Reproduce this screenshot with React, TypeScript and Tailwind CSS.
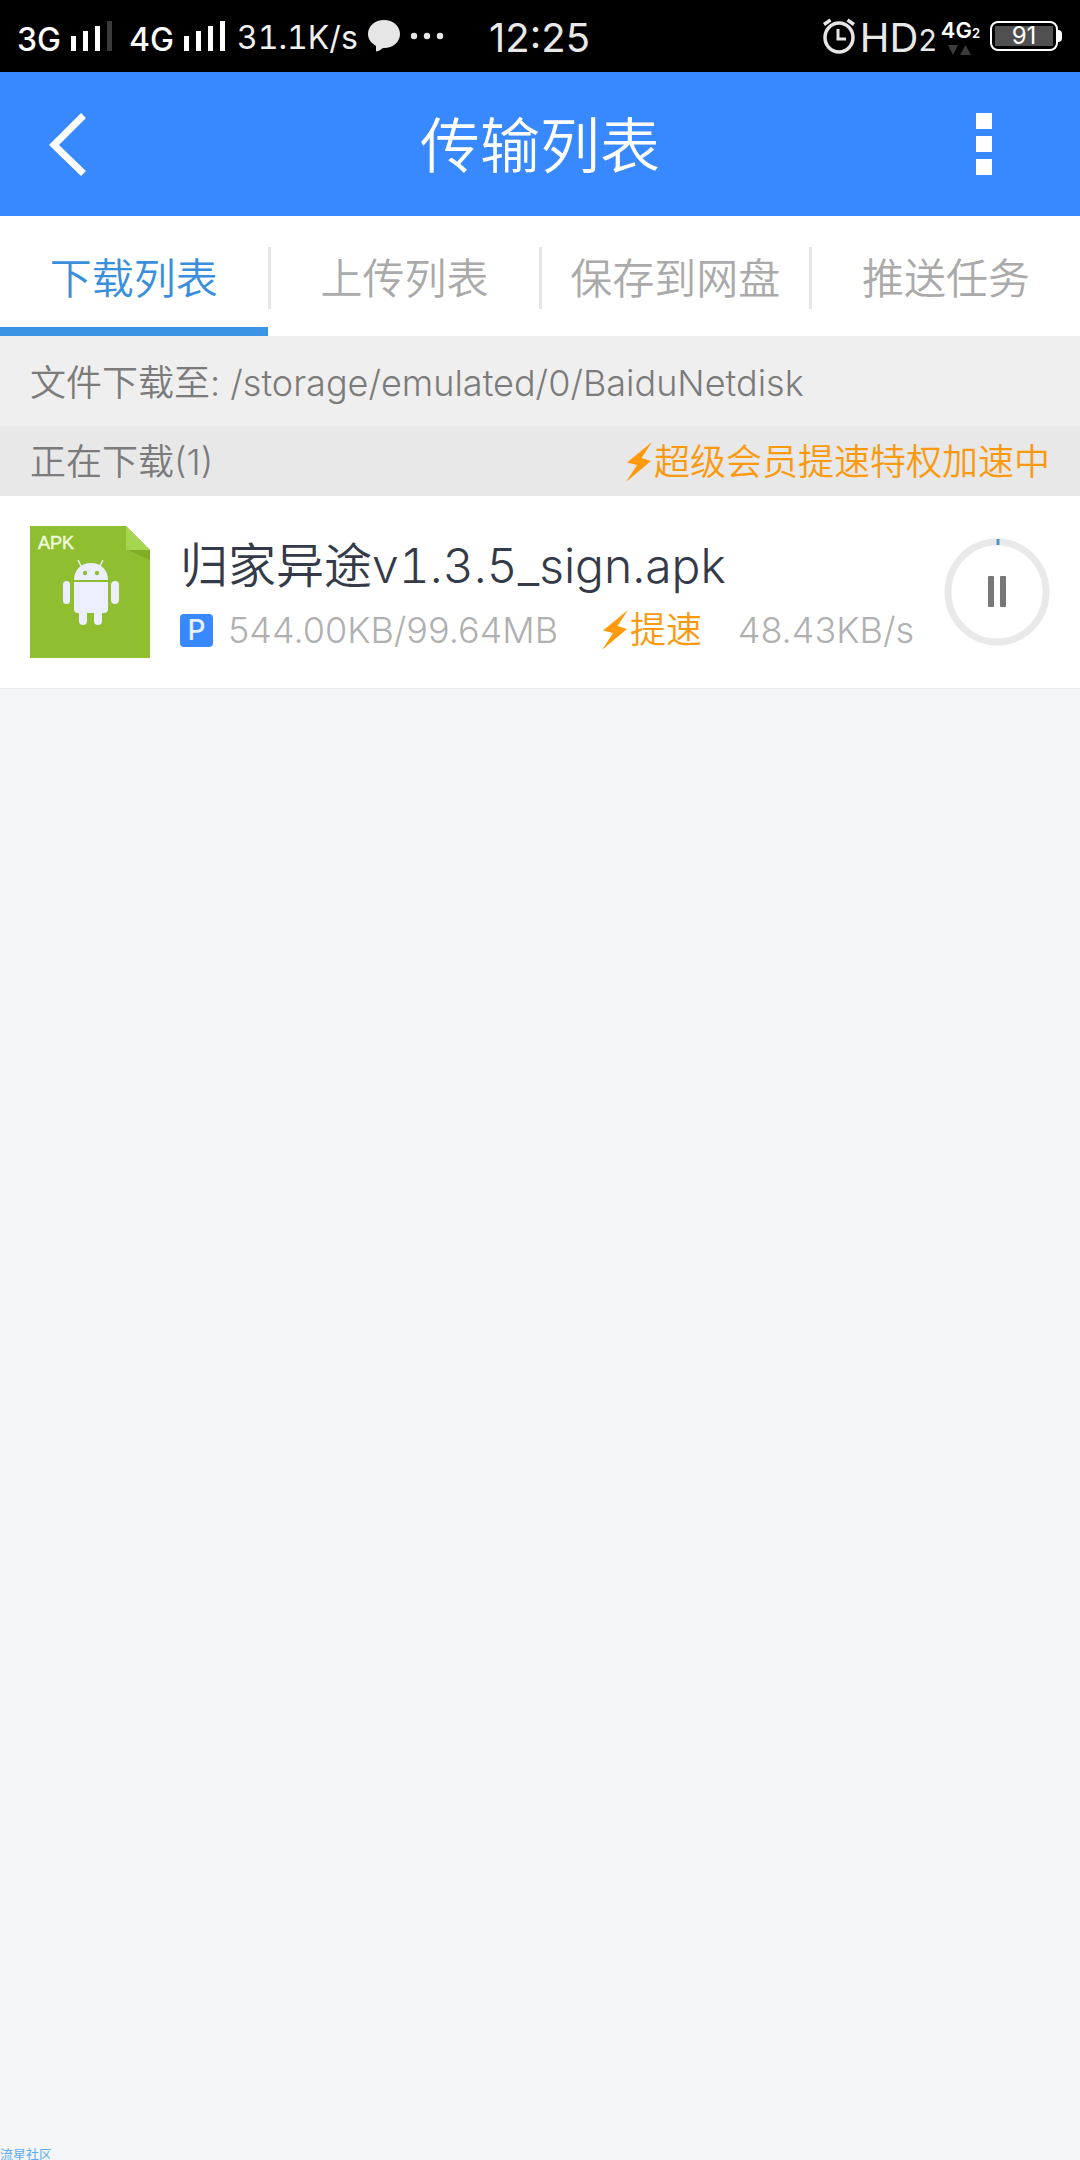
import { Fragment, useState } from "react";
import type { ReactNode } from "react";

const TABS = ["下载列表", "上传列表", "保存到网盘", "推送任务"];

function SignalBars({ weak }: { weak?: boolean }) {
    return (
        <svg width="41" height="30" viewBox="0 0 41 30" fill="#fff">
            <rect x="0" y="15" width="5" height="15" />
            <rect x="12" y="10" width="5" height="20" />
            <rect x="24" y="5" width="5" height="25" />
            <rect x="36" y="0" width="5" height="30" fill={weak ? "#3a3a3a" : "#fff"} />
        </svg>
    );
}

function Bolt() {
    return (
        <svg width="28" height="40" viewBox="0 0 28 40" fill="#ff9a0c" className="shrink-0">
            <path d="M26 0 1 20.500 11 23 0 40 25 19 15.500 16z" />
        </svg>
    );
}

function StatusBar() {
    return (
        <div className="flex h-[72px] items-center justify-between bg-black pr-[18px] pl-[17px] text-white">
            <div className="flex flex-1 items-center">
                <span className="w-[54px] pt-2 text-[32px] leading-8 font-medium">3G</span>
                <SignalBars weak />
                <span className="ml-[17px] w-[55px] pt-2 text-[32px] leading-8 font-medium">4G</span>
                <SignalBars />
                <span className="ml-3 w-[131px] pt-1 text-[32px] leading-8 text-[#f0f0f0] tabular-nums">31.1K/s</span>
                <svg width="32" height="32" viewBox="0 0 32 32" fill="#e6e6e6">
                    <path d="M16 0C7 0 0 6 0 14c0 5 3 9 8 12v5.500c3-.5 5-2 7-3.500h1c9 0 16-6 16-14S25 0 16 0z" />
                </svg>
                <svg width="34" height="8" viewBox="0 0 34 8" fill="#e6e6e6" className="ml-[10px]">
                    <circle cx="4" cy="4" r="3.200" />
                    <circle cx="17" cy="4" r="3.200" />
                    <circle cx="30" cy="4" r="3.200" />
                </svg>
            </div>
            <time className="pt-1 text-[40px] leading-10 text-[#e8e8e8]">12:25</time>
            <div className="flex flex-1 items-center justify-end">
                <svg width="34" height="36" viewBox="0 0 34 36" fill="none" stroke="#e6e6e6" strokeWidth="3.500">
                    <ellipse cx="17" cy="19.500" rx="14" ry="14.500" />
                    <path d="M16 11v10h8" strokeWidth="3" />
                    <path d="M2 6.500 8.500 2M32 6.500 25.500 2" />
                </svg>
                <span className="ml-1 pt-1 text-[40px] leading-10 text-[#e8e8e8]">HD</span>
                <span className="pt-2 text-[30px] leading-8 text-[#e8e8e8]">2</span>
                <div className="ml-1 flex flex-col items-center">
                    <span className="text-[22px] leading-6 font-semibold">
                        4G<span className="text-[13px]">2</span>
                    </span>
                    <svg width="24" height="10" viewBox="0 0 24 10" fill="#3c3c3c">
                        <path d="M0 0h10L5 10zM12 10h11L17.500 0z" />
                    </svg>
                </div>
                <div className="ml-[10px] flex items-center">
                    <div className="flex h-[30px] w-[68px] rounded-lg border-2 border-white p-[3px]">
                        <span className="flex flex-1 items-center justify-center bg-[#505050] text-[24px] leading-5">91</span>
                    </div>
                    <div className="h-3 w-1 rounded-r-sm bg-white" />
                </div>
            </div>
        </div>
    );
}

function Header() {
    return (
        <header className="flex h-36 items-center justify-between bg-[#3888ff] px-12 text-white">
            <button type="button" aria-label="返回" className="flex w-24 justify-start">
                <svg width="40" height="64" viewBox="0 0 40 64" fill="none" stroke="#fff" strokeWidth="7">
                    <path d="M35.500 3.500 6 33l29.500 28.500" />
                </svg>
            </button>
            <h1 className="pt-1 text-[60px] leading-[72px] font-[350]">传输列表</h1>
            <button type="button" aria-label="更多" className="flex w-24 flex-col items-center gap-[7px]">
                <span className="size-4 bg-white" />
                <span className="size-4 bg-white" />
                <span className="size-4 bg-white" />
            </button>
        </header>
    );
}

function Tabs() {
    const [active, setActive] = useState(0);

    return (
        <nav className="flex h-[120px] items-center bg-white">
            {TABS.map((tab, i) => (
                <Fragment key={tab}>
                    {i > 0 && <span className="mt-1 h-[62px] w-[3px] bg-[#e6e6e6]" />}
                    <button
                        type="button"
                        onClick={() => setActive(i)}
                        className={
                            active === i
                                ? "h-full flex-1 border-b-[9px] border-[#3a93e3] pt-[13px] text-[42px] font-[350] text-[#3a8fdc]"
                                : "h-full flex-1 pt-1 text-[42px] font-[350] text-[#aaaaaa]"
                        }
                    >
                        {tab}
                    </button>
                </Fragment>
            ))}
        </nav>
    );
}

function Boost({ children }: { children: ReactNode }) {
    return (
        <span className="flex items-center text-[#fa9a10]">
            <Bolt />
            {children}
        </span>
    );
}

function ApkIcon() {
    return (
        <svg width="120" height="132" viewBox="0 0 120 132" className="shrink-0">
            <path d="M0 0h96l24 24v108H0z" fill="#8fbf30" />
            <path d="M98 24h22v10z" fill="#7fad26" />
            <path d="M96 0l24 24H96z" fill="#a4d64f" />
            <text x="8" y="23" fontSize="18" fill="#eefadf" stroke="#eefadf" strokeWidth="0.500" fontFamily="Liberation Sans, sans-serif">APK</text>
            <g fill="#ecefff">
                <path d="M44 54c0-10 7-17 17-17s17 7 17 17z" />
                <path d="M44 56h34v27q0 4-4 4H48q-4 0-4-4z" />
                <rect x="33" y="55" width="7" height="23" rx="3.500" />
                <rect x="81" y="55" width="8" height="23" rx="4" />
                <rect x="49" y="80" width="8" height="19" rx="4" />
                <rect x="64" y="80" width="8" height="19" rx="4" />
            </g>
            <path d="M51 40l-3-6M70 40l3-6" stroke="#ecefff" strokeWidth="1.500" />
            <circle cx="55" cy="47" r="2.200" fill="#8fbf30" />
            <circle cx="67" cy="47" r="2.200" fill="#8fbf30" />
        </svg>
    );
}

function DownloadItem() {
    return (
        <article className="flex items-center gap-[30px] border-b border-[#e8ebee] bg-white px-[30px] py-[30px]">
            <ApkIcon />
            <div className="min-w-0 flex-1 pt-2">
                <h2 className="text-[48px] leading-[60px] font-[350] text-[#343a48] tabular-nums">归家异途v1.3.5_sign.apk</h2>
                <div className="flex items-center pt-2 text-[36px] leading-[52px] font-[350] text-[#b0b0b0]">
                    <span className="mr-[15px] flex size-[33px] items-center justify-center rounded bg-[#3888ff] text-[28px] font-medium text-[#e6f0ff]">P</span>
                    <span className="mr-11">544.00KB/99.64MB</span>
                    <Boost>提速</Boost>
                    <span className="ml-auto">48.43KB/s</span>
                </div>
            </div>
            <button type="button" aria-label="暂停" className="shrink-0">
                <svg width="106" height="108" viewBox="0 0 106 108" fill="none">
                    <ellipse cx="53" cy="54" rx="49" ry="50" stroke="#e9e9e9" strokeWidth="7" />
                    <path d="M54 1v6" stroke="#4e93cc" strokeWidth="3" />
                    <rect x="44" y="38" width="6" height="31" rx="1" fill="#777" />
                    <rect x="56" y="38" width="6" height="31" rx="1" fill="#777" />
                </svg>
            </button>
        </article>
    );
}

export default function App() {
    return (
        <div className="flex min-h-screen flex-col bg-[#f4f5f7] font-['Inter','Noto_Sans_CJK_SC',sans-serif]">
            <StatusBar />
            <Header />
            <Tabs />
            <p className="flex h-[90px] items-center bg-[#efefef] px-[30px] pt-1 text-[36px] font-[350] text-[#7b7b7b]">
                文件下载至: /storage/emulated/0/BaiduNetdisk
            </p>
            <div className="flex h-[70px] items-center justify-between bg-[#e8e8e8] px-[30px] pt-px text-[36px] font-[350] text-[#7b7b7b]">
                <h2>正在下载(1)</h2>
                <Boost>超级会员提速特权加速中</Boost>
            </div>
            <DownloadItem />
            <footer className="mt-auto text-[13px] leading-3 text-[#5eacf0]">流星社区</footer>
        </div>
    );
}
